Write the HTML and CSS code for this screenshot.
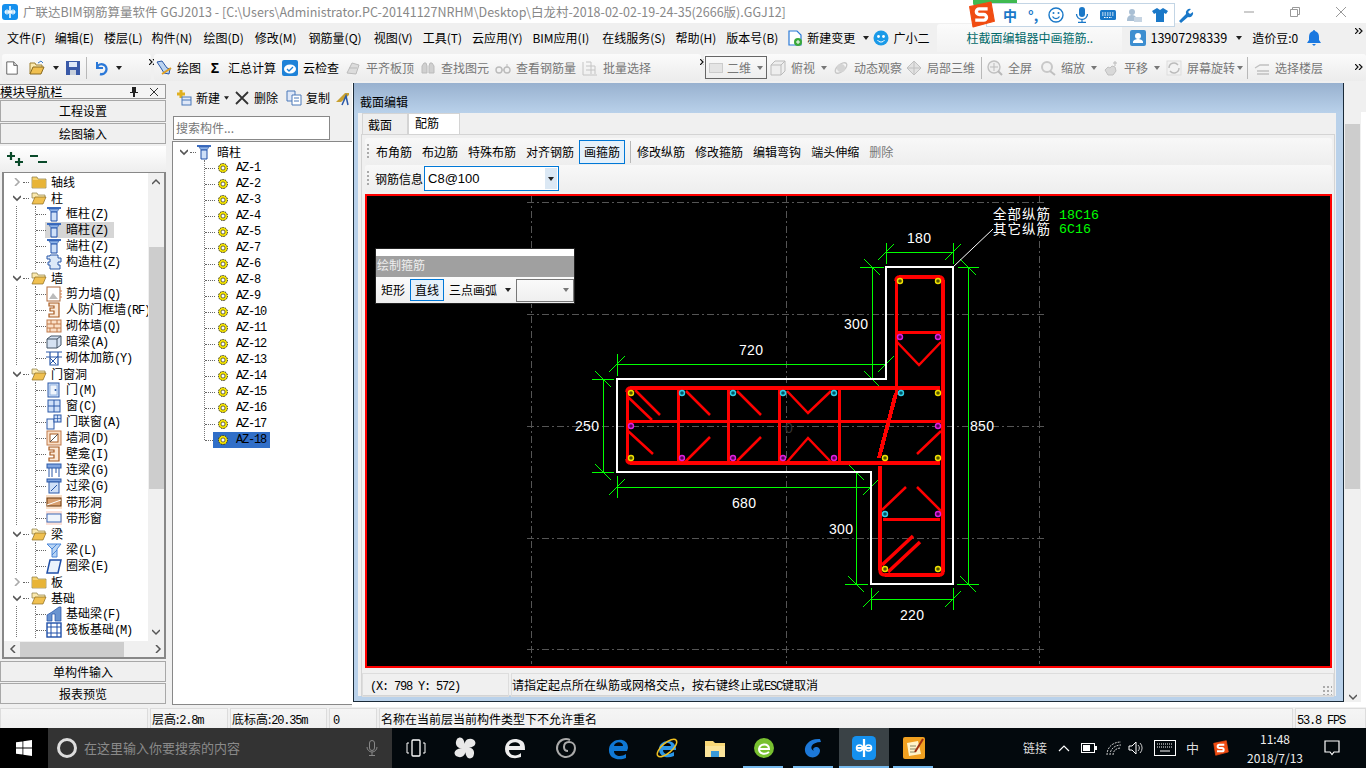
FILE: index.html
```html
<!DOCTYPE html>
<html lang="zh">
<head>
<meta charset="utf-8">
<title>广联达BIM钢筋算量软件 GGJ2013</title>
<link rel="stylesheet" href="styles.css">
</head>
<body>
<svg class="defs" width="0" height="0">
  <defs>
    <symbol id="chev-d" viewBox="0 0 8 8"><path d="M0 2l4 4 4-4" fill="none" stroke="#555" stroke-width="1.6"/></symbol>
    <symbol id="chev-r" viewBox="0 0 8 8"><path d="M2 0l4 4-4 4" fill="none" stroke="#aaa" stroke-width="1.6"/></symbol>
    <symbol id="folder" viewBox="0 0 16 16"><path d="M1 3h5l1 2h8v9H1z" fill="#f6d26e" stroke="#8a7a40" stroke-width=".7"/><path d="M1.5 6h13v7.500h-13z" fill="#e8b437"/></symbol>
    <symbol id="folder-open" viewBox="0 0 16 16"><path d="M1 3h5l1 2h7v3H1z" fill="#fbeab0" stroke="#8a7a40" stroke-width=".7"/><path d="M1 14l3-7h11l-3 7z" fill="#f0c050" stroke="#8a6a20" stroke-width=".7"/></symbol>
    <symbol id="col" viewBox="0 0 16 16"><path d="M1 1h14v2H1z" fill="#3b6cc0"/><path d="M3 3h10l-2 3H5z" fill="#8fb4ea" stroke="#2f5aa8" stroke-width=".6"/><path d="M5 6h6v9H5z" fill="#cfe0f8" stroke="#1f4fa8"/></symbol>
    <symbol id="gz" viewBox="0 0 16 16"><path d="M4 1h8v3h3v4h-3v3h2v4H4v-4H2V8h2V5H1V2h3z" fill="#dce8f8" stroke="#2a58a8"/></symbol>
    <symbol id="shear" viewBox="0 0 16 16"><rect x="1" y="1" width="13" height="14" fill="#fff" stroke="#b06a3a"/><path d="M3 13l4-6 5 6z" fill="#bbb"/><path d="M15 4v9" stroke="#d08050" stroke-dasharray="2 1"/></symbol>
    <symbol id="rf" viewBox="0 0 16 16"><path d="M3 1h10v14H3v-3h5V9H4V6h4V4H3z" fill="#fbe9d8" stroke="#a85a20" stroke-width="1.200"/></symbol>
    <symbol id="brick" viewBox="0 0 16 16"><rect x="1" y="2" width="14" height="12" fill="#fbe0c8" stroke="#c07a4a"/><path d="M1 6h14M1 10h14M5 2v4M11 2v4M8 6v4M4 10v4M11 10v4" stroke="#c07a4a"/></symbol>
    <symbol id="dbeam" viewBox="0 0 16 16"><path d="M1 5l4-3h10v9l-4 3H1z" fill="#d5e2f2" stroke="#456"/><path d="M1 5h10v9M11 5l4-3" fill="none" stroke="#456"/></symbol>
    <symbol id="rebar" viewBox="0 0 16 16"><path d="M0 2h16M0 7h16M4 2v13h8V2" fill="none" stroke="#2a58a8" stroke-width="1.200"/><path d="M4 14l8-8M4 8l6 6" stroke="#2a58a8"/></symbol>
    <symbol id="door" viewBox="0 0 16 16"><rect x="2" y="1" width="11" height="14" fill="#cfe0f8" stroke="#2a58a8"/><rect x="4" y="3" width="7" height="10" fill="#eef4fc" stroke="#6a94d0" stroke-width=".6"/><circle cx="9.500" cy="8" r="1" fill="#2a58a8"/></symbol>
    <symbol id="win" viewBox="0 0 16 16"><rect x="2" y="2" width="12" height="12" fill="#cfe0f8" stroke="#2a58a8"/><path d="M8 2v12M2 8h12" stroke="#2a58a8"/></symbol>
    <symbol id="dwin" viewBox="0 0 16 16"><rect x="1" y="5" width="7" height="10" fill="#eef4fc" stroke="#2a58a8"/><rect x="8" y="1" width="7" height="7" fill="#cfe0f8" stroke="#2a58a8"/><path d="M11.500 1v7M8 4.500h7" stroke="#2a58a8" stroke-width=".7"/></symbol>
    <symbol id="hole" viewBox="0 0 16 16"><rect x="1" y="1" width="14" height="14" fill="#fbe0c8" stroke="#c07a4a"/><rect x="4" y="4" width="8" height="8" fill="#fff" stroke="#a85a20"/><path d="M4 12l8-8" stroke="#555"/></symbol>
    <symbol id="lbeam" viewBox="0 0 16 16"><rect x="1" y="2" width="14" height="4" fill="#7fa4e0" stroke="#2a58a8"/><path d="M3 6v9M13 6v9M6 6v9M10 6v5" stroke="#2a58a8"/></symbol>
    <symbol id="lintel" viewBox="0 0 16 16"><rect x="1" y="1" width="14" height="3" fill="#7fa4e0" stroke="#2a58a8"/><rect x="3" y="4" width="10" height="11" fill="#cfe0f8" stroke="#2a58a8"/><path d="M5 13l6-6" stroke="#2a58a8"/></symbol>
    <symbol id="shole" viewBox="0 0 16 16"><rect x="0" y="1" width="16" height="14" fill="#fbe0c8"/><rect x="1" y="4" width="14" height="8" fill="#d8a070" stroke="#6a3a10"/><path d="M1 11l14-5" stroke="#fff"/></symbol>
    <symbol id="swin" viewBox="0 0 16 16"><rect x="0" y="1" width="16" height="14" fill="#fbe0d8"/><rect x="1" y="4" width="14" height="8" fill="#eef4fc" stroke="#3a6ab8"/></symbol>
    <symbol id="beam" viewBox="0 0 16 16"><path d="M1 2h14l-4 5v8H6V7z" fill="#b8d4f4" stroke="#4a86d8"/><path d="M6 7l5-5M6 13l5-5" stroke="#4a86d8"/></symbol>
    <symbol id="ring" viewBox="0 0 16 16"><path d="M4 2h11l-3 13H1z" fill="#eaf2fc" stroke="#1f4fa8" stroke-width="1.500"/></symbol>
    <symbol id="fbeam" viewBox="0 0 16 16"><path d="M1 15V9l5-3 7-5h2v14H9V8H6v7z" fill="#6a94d0" stroke="#1f4fa8" stroke-width=".7"/></symbol>
    <symbol id="raft" viewBox="0 0 16 16"><rect x="1" y="1" width="14" height="14" fill="#fff" stroke="#1f4fa8" stroke-width="1.400"/><path d="M1 5h14M1 11h14M5 1v14M11 1v14" stroke="#1f4fa8"/></symbol>
    <symbol id="gear" viewBox="0 0 12 12"><circle cx="6" cy="6" r="4.500" fill="#f5e400" stroke="#222" stroke-dasharray="1.500 1"/><circle cx="6" cy="6" r="2" fill="#fff" stroke="#333" stroke-width=".7"/></symbol>
    <symbol id="grey" viewBox="0 0 16 16"><path d="M2 13l5-10 7 2-3 9z" fill="#dcdcdc" stroke="#bbb"/><path d="M4 8h8" stroke="#bbb"/></symbol>
    <symbol id="bino" viewBox="0 0 16 16"><path d="M2 13V6l2-3h2l1 3v7zM9 13V6l1-3h2l2 3v7z" fill="#d0d0d0" stroke="#bbb"/></symbol>
    <symbol id="glass" viewBox="0 0 16 16"><circle cx="4" cy="10" r="3" fill="none" stroke="#bbb" stroke-width="1.400"/><circle cx="12" cy="10" r="3" fill="none" stroke="#bbb" stroke-width="1.400"/><path d="M7 10h2M12 7V4" stroke="#bbb"/></symbol>
    <symbol id="grid" viewBox="0 0 16 16"><path d="M1 2v13h14M4 2h5v12M4 6h9M4 10h9M13 6v8" fill="none" stroke="#c4c4c4"/></symbol>
    <symbol id="cube" viewBox="0 0 16 16"><path d="M1 5l4-4h10v10l-4 4H1zM1 5h10v10M11 5l4-4" fill="#eee" stroke="#bbb"/></symbol>
    <symbol id="orbit" viewBox="0 0 16 16"><ellipse cx="8" cy="8" rx="7" ry="3.500" transform="rotate(-40 8 8)" fill="none" stroke="#c8c8c8" stroke-width="1.400"/><circle cx="8" cy="8" r="4" fill="#d4d4d4"/></symbol>
    <symbol id="local" viewBox="0 0 16 16"><path d="M8 1l7 7-7 7-7-7z" fill="#e2e2e2" stroke="#c0c0c0"/><path d="M8 1v14M1 8h14" stroke="#c0c0c0"/></symbol>
    <symbol id="zoomfit" viewBox="0 0 16 16"><circle cx="7" cy="7" r="6" fill="#eee" stroke="#c0c0c0" stroke-width="1.400"/><path d="M11 11l4 4" stroke="#b8b8b8" stroke-width="2"/><path d="M7 3v8M3 7h8" stroke="#bbb"/></symbol>
    <symbol id="zoomio" viewBox="0 0 16 16"><circle cx="7" cy="7" r="5" fill="#f2f2f2" stroke="#c8c8c8" stroke-width="2"/><path d="M10 11l5 4" stroke="#c0c0c0" stroke-width="2"/></symbol>
    <symbol id="hand" viewBox="0 0 16 16"><path d="M2 10l3-3 2 1 2-2 3 1 1 4-3 4H5z" fill="#d8d8d8" stroke="#c0c0c0"/><path d="M12 1v5M10 3h4" stroke="#bbb"/></symbol>
    <symbol id="rot" viewBox="0 0 16 16"><rect x="1" y="1" width="14" height="14" fill="#f2f2f2" stroke="#ddd"/><path d="M3 8a5 5 0 0 1 9-3M13 8a5 5 0 0 1-9 3" fill="none" stroke="#bbb" stroke-width="1.400"/></symbol>
    <symbol id="floors" viewBox="0 0 16 16"><path d="M1 8l5-3h9M3 11h12M3 14h12M6 5h9" fill="none" stroke="#c0c0c0" stroke-width="1.300"/></symbol>
    <symbol id="caret" viewBox="0 0 6 4"><path d="M0 0h6L3 4z" fill="#222"/></symbol>
    <symbol id="caret-g" viewBox="0 0 6 4"><path d="M0 0h6L3 4z" fill="#777"/></symbol>
    <symbol id="more" viewBox="0 0 8 6"><path d="M0 0l3 3-3 3M4 0l3 3-3 3" fill="none" stroke="#111" stroke-width="1.200"/></symbol>
    <symbol id="app" viewBox="0 0 16 16"><rect width="16" height="16" rx="3" fill="#1590ee"/><path d="M8 2v12M3 8h10" stroke="#fff" stroke-width="1.500"/><circle cx="5" cy="8" r="2" fill="none" stroke="#fff"/><circle cx="11" cy="8" r="2" fill="none" stroke="#fff"/></symbol>
    <symbol id="sogou" viewBox="0 0 24 24"><path d="M1 5l19-4 3 17-19 5z" fill="#f04c12" stroke="#f04c12" stroke-linejoin="round"/><path d="M17 7H9.500a2.500 2.500 0 0 0 0 5h4a2.500 2.500 0 0 1 0 5H6" fill="none" stroke="#fff" stroke-width="3"/></symbol>
  </defs>
</svg>

<div class="sogou">
  <span class="sg-top"></span>
  <svg class="sg-logo"><use href="#sogou"/></svg>
  <div class="sg-bar">
    <span class="sg-zh">中</span>
    <span class="sg-pt">°,</span>
    <svg class="sg-ic" viewBox="0 0 16 16"><circle cx="8" cy="8" r="7" fill="none" stroke="#1a78c8" stroke-width="1.400"/><circle cx="5.500" cy="6" r="1" fill="#1a78c8"/><circle cx="10.500" cy="6" r="1" fill="#1a78c8"/><path d="M4.500 9.500a4 4 0 0 0 7 0" fill="none" stroke="#1a78c8" stroke-width="1.300"/></svg>
    <svg class="sg-ic" viewBox="0 0 16 16"><rect x="5" y="0" width="6" height="10" rx="3" fill="#1a78c8"/><path d="M2.500 7a5.500 5.500 0 0 0 11 0M8 12v3M4 15.500h8" fill="none" stroke="#1a78c8" stroke-width="1.300"/></svg>
    <svg class="sg-ic" viewBox="0 0 16 16"><rect x="0" y="3" width="16" height="10" rx="1.500" fill="#1a78c8"/><path d="M2 6h12M2 8h12M4 10.500h8" stroke="#fff" stroke-dasharray="1.500 1"/></svg>
    <svg class="sg-ic" viewBox="0 0 16 16"><circle cx="6" cy="5" r="3" fill="#a9bfd4"/><path d="M1 13c0-4 3-5 5-5s4 1 4 3v3H1z" fill="#a9bfd4"/><rect x="8" y="10" width="8" height="5" fill="#c6d4e2"/></svg>
    <svg class="sg-ic" viewBox="0 0 16 16"><path d="M5 1L0 4l2 3 2-1v9h8V6l2 1 2-3-5-3-3 2z" fill="#1a78c8"/></svg>
    <svg class="sg-ic" viewBox="0 0 16 16"><path d="M1 14l7-7a4 4 0 0 1 5-5l-3 3 2 2 3-2a4 4 0 0 1-5 5l-7 6z" fill="#1a78c8"/></svg>
  </div>
</div>

<header class="titlebar">
  <svg class="title-ic"><use href="#app"/></svg>
  <span class="title-text">广联达BIM钢筋算量软件 GGJ2013 - [C:\Users\Administrator.PC-20141127NRHM\Desktop\白龙村-2018-02-02-19-24-35(2666版).GGJ12]</span>
  <div class="winctl">
    <svg class="wc" viewBox="0 0 12 12"><path d="M1 6h10" stroke="#999"/></svg>
    <svg class="wc" viewBox="0 0 12 12"><path d="M1.500 3.500h7v7h-7zM3.500 3.500v-2h7v7h-2" fill="none" stroke="#999"/></svg>
    <svg class="wc" viewBox="0 0 12 12"><path d="M1 1l10 10M11 1L1 11" stroke="#999"/></svg>
  </div>
</header>

<nav class="menubar">
  <span class="mi mr9">文件(F)</span><span class="mi">编辑(E)</span><span class="mi mr9">楼层(L)</span><span class="mi mr11">构件(N)</span><span class="mi mr11">绘图(D)</span><span class="mi mr12">修改(M)</span><span class="mi mr12">钢筋量(Q)</span><span class="mi">视图(V)</span><span class="mi">工具(T)</span><span class="mi">云应用(Y)</span><span class="mi mr13">BIM应用(I)</span><span class="mi">在线服务(S)</span><span class="mi">帮助(H)</span><span class="mi mr9">版本号(B)</span>
  <span class="mi mi-ic">
    <svg class="ic" viewBox="0 0 16 16"><path d="M2 1h8l4 4v10H2z" fill="#fff" stroke="#2a7ad8" stroke-width="1.200"/><circle cx="11" cy="12" r="4" fill="#3aa83a"/><path d="M9 12h4M11 10v4" stroke="#fff"/></svg>新建变更<svg class="caret"><use href="#caret"/></svg>
  </span>
  <span class="mi mi-ic mi-xer">
    <svg class="ic" viewBox="0 0 16 16"><circle cx="8" cy="8" r="7.500" fill="#1a9ae8"/><circle cx="5.500" cy="6.500" r="1.400" fill="#fff"/><circle cx="10.500" cy="6.500" r="1.400" fill="#fff"/><path d="M4.500 10a4 4 0 0 0 7 0" fill="none" stroke="#fff"/></svg>广小二
  </span>
  <span class="news">柱截面编辑器中画箍筋..</span>
  <span class="mi mi-ic mi-user">
    <svg class="ic" viewBox="0 0 16 16"><rect width="16" height="16" rx="2" fill="#3d8ed0"/><circle cx="8" cy="6" r="3" fill="#fff"/><path d="M3 13h10v-1c0-2-3-3-5-3s-5 1-5 3z" fill="#fff"/></svg><span class="phone">13907298339</span><svg class="caret caret-u"><use href="#caret"/></svg>
  </span>
  <span class="mi">造价豆:0</span>
  <svg class="ic bell" viewBox="0 0 16 16"><path d="M8 0a1 1 0 0 1 1 1c3 1 4 3 4 6v3l2 3H1l2-3V7c0-3 1-5 4-6a1 1 0 0 1 1-1z" fill="#1a78e0"/><path d="M6 14h4l-2 2z" fill="#1a78e0"/></svg>
  <svg class="more more-end"><use href="#more"/></svg>
</nav>

<div class="toolbar">
  <div class="seg seg-a">
    <svg class="ic i14" viewBox="0 0 16 16"><path d="M2 1h8l4 4v10H2z" fill="#fff" stroke="#555"/><path d="M10 1v4h4" fill="#ddd" stroke="#555"/></svg>
    <svg class="ic ml10" viewBox="0 0 16 16"><path d="M1 14V3h5l1 2h6v2" fill="#fbeab0" stroke="#a08030"/><path d="M1 14l3-7h11l-3 7z" fill="#f0c050" stroke="#8a6a20"/><path d="M9 3l3-2 2 2" fill="none" stroke="#3a7ac8"/></svg>
    <svg class="caret ml8"><use href="#caret"/></svg>
    <svg class="ic ml6" viewBox="0 0 16 16"><path d="M1 1h14v14H1z" fill="#3a5aa8"/><path d="M4 2h8v5H4z" fill="#dfe8f8"/><path d="M5 10h6v5H5z" fill="#c8d0dc"/></svg>
    <span class="sep ml5"></span>
    <svg class="ic ml6" viewBox="0 0 16 16"><path d="M4 2v6h6" fill="none" stroke="#2a78d8" stroke-width="2"/><path d="M4 7a5 5 0 1 1 3 7" fill="none" stroke="#2a78d8" stroke-width="2.400"/></svg>
    <svg class="caret ml7"><use href="#caret"/></svg>
    <svg class="more ml27"><use href="#more"/></svg>
  </div>
  <div class="seg seg-b">
    <span class="ti"><svg class="ic" viewBox="0 0 16 16"><path d="M1 2l5-1 5 7 3 1-1 5-5-1-3-5z" fill="#bcd4f0" stroke="#2a58a8"/><path d="M6 14l9-6" stroke="#e0a020" stroke-width="2"/></svg>绘图</span>
    <span class="ti ti-s"><b class="sigma">Σ</b>汇总计算</span>
    <span class="ti"><svg class="ic" viewBox="0 0 16 16"><rect width="16" height="16" rx="2" fill="#1e82d8"/><ellipse cx="8" cy="9" rx="6" ry="4.500" fill="#fff"/><path d="M5 9l2 2 4-4" fill="none" stroke="#1e82d8" stroke-width="1.300"/></svg>云检查</span>
    <span class="ti off"><svg class="ic"><use href="#grey"/></svg>平齐板顶</span>
    <span class="ti off"><svg class="ic"><use href="#bino"/></svg>查找图元</span>
    <span class="ti off"><svg class="ic"><use href="#glass"/></svg>查看钢筋量</span>
    <span class="ti off"><svg class="ic"><use href="#grid"/></svg>批量选择</span>
    <svg class="more ml42"><use href="#more"/></svg>
  </div>
  <div class="seg seg-c">
    <span class="combo2d"><i class="swatch"></i>二维<svg class="caret caret-r"><use href="#caret-g"/></svg></span>
    <span class="ti off ml3"><svg class="ic"><use href="#cube"/></svg>俯视<svg class="caret ml1"><use href="#caret-g"/></svg></span>
    <span class="ti off ml6"><svg class="ic"><use href="#orbit"/></svg>动态观察</span>
    <span class="ti off ml4"><svg class="ic"><use href="#local"/></svg>局部三维</span>
    <span class="sep ml6"></span>
    <span class="ti off ml5"><svg class="ic"><use href="#zoomfit"/></svg>全屏</span>
    <span class="ti off ml8"><svg class="ic"><use href="#zoomio"/></svg>缩放<svg class="caret ml1"><use href="#caret-g"/></svg></span>
    <span class="ti off ml6"><svg class="ic"><use href="#hand"/></svg>平移<svg class="caret ml1"><use href="#caret-g"/></svg></span>
    <span class="ti off ml6"><svg class="ic"><use href="#rot"/></svg>屏幕旋转<svg class="caret mln3"><use href="#caret-g"/></svg></span>
    <span class="sep ml4"></span>
    <span class="ti off ml6"><svg class="ic"><use href="#floors"/></svg>选择楼层</span>
    <svg class="more more-end"><use href="#more"/></svg>
  </div>
</div>

<main class="main">
  <aside class="nav">
    <div class="nav-head"><span>模块导航栏</span><span class="nav-pin">
      <svg class="pin" viewBox="0 0 10 10"><path d="M3 0h4v5h2v1H6v4H4V6H1V5h2z" fill="#222"/></svg>
      <svg class="pin" viewBox="0 0 10 10"><path d="M1 1l8 8M9 1L1 9" stroke="#333"/></svg></span></div>
    <div class="nav-btn nav-btn-1">工程设置</div>
    <div class="nav-btn">绘图输入</div>
    <div class="nav-tools">
      <svg class="plusminus" viewBox="0 0 18 14"><path d="M1 4h8M5 0v8M9 10h8M13 6v8" stroke="#0a4a2a" stroke-width="2.200"/></svg>
      <svg class="plusminus" viewBox="0 0 18 14"><path d="M0 4h8M8 10h9" stroke="#0a4a2a" stroke-width="2.200"/></svg>
    </div>
    <div class="tree-box">
      <div class="tree-view">
        <div class="l1"><svg class="tw"><use href="#chev-r"/></svg><i class="cn1"></i><svg class="ic"><use href="#folder"/></svg><span>轴线</span></div>
        <div class="l1"><svg class="tw"><use href="#chev-d"/></svg><i class="cn1"></i><svg class="ic"><use href="#folder-open"/></svg><span>柱</span></div>
        <div class="kids"><div class="kids-in">
          <div class="l2"><i class="cn2"></i><svg class="ic"><use href="#col"/></svg><span>框柱<span class="lat">(Z)</span></span></div>
          <div class="l2 sel"><i class="cn2"></i><svg class="ic"><use href="#col"/></svg><span>暗柱<span class="lat">(Z)</span></span></div>
          <div class="l2"><i class="cn2"></i><svg class="ic"><use href="#col"/></svg><span>端柱<span class="lat">(Z)</span></span></div>
          <div class="l2"><i class="cn2"></i><svg class="ic"><use href="#gz"/></svg><span>构造柱<span class="lat">(Z)</span></span></div>
        </div></div>
        <div class="l1"><svg class="tw"><use href="#chev-d"/></svg><i class="cn1"></i><svg class="ic"><use href="#folder-open"/></svg><span>墙</span></div>
        <div class="kids"><div class="kids-in">
          <div class="l2"><i class="cn2"></i><svg class="ic"><use href="#shear"/></svg><span>剪力墙<span class="lat">(Q)</span></span></div>
          <div class="l2"><i class="cn2"></i><svg class="ic"><use href="#rf"/></svg><span>人防门框墙<span class="lat">(RF)</span></span></div>
          <div class="l2"><i class="cn2"></i><svg class="ic"><use href="#brick"/></svg><span>砌体墙<span class="lat">(Q)</span></span></div>
          <div class="l2"><i class="cn2"></i><svg class="ic"><use href="#dbeam"/></svg><span>暗梁<span class="lat">(A)</span></span></div>
          <div class="l2"><i class="cn2"></i><svg class="ic"><use href="#rebar"/></svg><span>砌体加筋<span class="lat">(Y)</span></span></div>
        </div></div>
        <div class="l1"><svg class="tw"><use href="#chev-d"/></svg><i class="cn1"></i><svg class="ic"><use href="#folder-open"/></svg><span>门窗洞</span></div>
        <div class="kids"><div class="kids-in">
          <div class="l2"><i class="cn2"></i><svg class="ic"><use href="#door"/></svg><span>门<span class="lat">(M)</span></span></div>
          <div class="l2"><i class="cn2"></i><svg class="ic"><use href="#win"/></svg><span>窗<span class="lat">(C)</span></span></div>
          <div class="l2"><i class="cn2"></i><svg class="ic"><use href="#dwin"/></svg><span>门联窗<span class="lat">(A)</span></span></div>
          <div class="l2"><i class="cn2"></i><svg class="ic"><use href="#hole"/></svg><span>墙洞<span class="lat">(D)</span></span></div>
          <div class="l2"><i class="cn2"></i><svg class="ic"><use href="#rf"/></svg><span>壁龛<span class="lat">(I)</span></span></div>
          <div class="l2"><i class="cn2"></i><svg class="ic"><use href="#lbeam"/></svg><span>连梁<span class="lat">(G)</span></span></div>
          <div class="l2"><i class="cn2"></i><svg class="ic"><use href="#lintel"/></svg><span>过梁<span class="lat">(G)</span></span></div>
          <div class="l2"><i class="cn2"></i><svg class="ic"><use href="#shole"/></svg><span>带形洞</span></div>
          <div class="l2"><i class="cn2"></i><svg class="ic"><use href="#swin"/></svg><span>带形窗</span></div>
        </div></div>
        <div class="l1"><svg class="tw"><use href="#chev-d"/></svg><i class="cn1"></i><svg class="ic"><use href="#folder-open"/></svg><span>梁</span></div>
        <div class="kids"><div class="kids-in">
          <div class="l2"><i class="cn2"></i><svg class="ic"><use href="#beam"/></svg><span>梁<span class="lat">(L)</span></span></div>
          <div class="l2"><i class="cn2"></i><svg class="ic"><use href="#ring"/></svg><span>圈梁<span class="lat">(E)</span></span></div>
        </div></div>
        <div class="l1"><svg class="tw"><use href="#chev-r"/></svg><i class="cn1"></i><svg class="ic"><use href="#folder"/></svg><span>板</span></div>
        <div class="l1"><svg class="tw"><use href="#chev-d"/></svg><i class="cn1"></i><svg class="ic"><use href="#folder-open"/></svg><span>基础</span></div>
        <div class="kids"><div class="kids-in">
          <div class="l2"><i class="cn2"></i><svg class="ic"><use href="#fbeam"/></svg><span>基础梁<span class="lat">(F)</span></span></div>
          <div class="l2"><i class="cn2"></i><svg class="ic"><use href="#raft"/></svg><span>筏板基础<span class="lat">(M)</span></span></div>
        </div></div>
      </div>
      <div class="vscroll"><svg class="sb-ar" viewBox="0 0 8 8"><path d="M0 6l4-4 4 4" fill="none" stroke="#555" stroke-width="1.500"/></svg><i class="vthumb"></i><svg class="sb-ar sb-end" viewBox="0 0 8 8"><path d="M0 2l4 4 4-4" fill="none" stroke="#555" stroke-width="1.500"/></svg></div>
      <div class="hscroll"><svg class="sb-ar" viewBox="0 0 8 8"><path d="M6 0L2 4l4 4" fill="none" stroke="#555" stroke-width="1.500"/></svg><i class="hthumb"></i><svg class="sb-ar" viewBox="0 0 8 8"><path d="M2 0l4 4-4 4" fill="none" stroke="#555" stroke-width="1.500"/></svg></div>
    </div>
    <div class="nav-btn nav-btn-b">单构件输入</div>
    <div class="nav-btn">报表预览</div>
  </aside>

  <section class="comp">
    <div class="comp-tools">
      <span class="ti"><svg class="ic" viewBox="0 0 16 16"><path d="M1 4h8M5 0v8" stroke="#e0b020" stroke-width="3"/><rect x="6" y="7" width="9" height="8" fill="#dfe8f8" stroke="#4a78b8"/><path d="M6 10h9" stroke="#4a78b8"/></svg>新建<svg class="caret caret-n"><use href="#caret"/></svg></span>
      <span class="ti"><svg class="ic" viewBox="0 0 16 16"><path d="M2 2l12 12M14 2L2 14" stroke="#333" stroke-width="1.800"/></svg>删除</span>
      <span class="ti ml3"><svg class="ic" viewBox="0 0 16 16"><path d="M1 1h8v10H1z" fill="#dfe8f8" stroke="#4a78b8"/><path d="M6 5h9v10H6z" fill="#fff" stroke="#4a78b8"/><path d="M8 8h5M8 11h5" stroke="#4a78b8"/></svg>复制</span>
      <svg class="ic" viewBox="0 0 16 16"><path d="M1 12l9-9h4v2l-8 7z" fill="#c8a030"/><path d="M7 15l4-9 2 9" fill="none" stroke="#2a58a8" stroke-width="1.500"/></svg>
    </div>
    <div class="search"><span class="search-in">搜索构件...</span></div>
    <div class="comp-tree">
      <div class="root-row"><svg class="tw"><use href="#chev-d"/></svg><i class="cn3"></i><svg class="ic"><use href="#col"/></svg><span>暗柱</span></div>
      <div class="az-list">
        <div class="az"><i class="cn2"></i><svg class="gear"><use href="#gear"/></svg><span>AZ-1</span></div>
        <div class="az"><i class="cn2"></i><svg class="gear"><use href="#gear"/></svg><span>AZ-2</span></div>
        <div class="az"><i class="cn2"></i><svg class="gear"><use href="#gear"/></svg><span>AZ-3</span></div>
        <div class="az"><i class="cn2"></i><svg class="gear"><use href="#gear"/></svg><span>AZ-4</span></div>
        <div class="az"><i class="cn2"></i><svg class="gear"><use href="#gear"/></svg><span>AZ-5</span></div>
        <div class="az"><i class="cn2"></i><svg class="gear"><use href="#gear"/></svg><span>AZ-7</span></div>
        <div class="az"><i class="cn2"></i><svg class="gear"><use href="#gear"/></svg><span>AZ-6</span></div>
        <div class="az"><i class="cn2"></i><svg class="gear"><use href="#gear"/></svg><span>AZ-8</span></div>
        <div class="az"><i class="cn2"></i><svg class="gear"><use href="#gear"/></svg><span>AZ-9</span></div>
        <div class="az"><i class="cn2"></i><svg class="gear"><use href="#gear"/></svg><span>AZ-10</span></div>
        <div class="az"><i class="cn2"></i><svg class="gear"><use href="#gear"/></svg><span>AZ-11</span></div>
        <div class="az"><i class="cn2"></i><svg class="gear"><use href="#gear"/></svg><span>AZ-12</span></div>
        <div class="az"><i class="cn2"></i><svg class="gear"><use href="#gear"/></svg><span>AZ-13</span></div>
        <div class="az"><i class="cn2"></i><svg class="gear"><use href="#gear"/></svg><span>AZ-14</span></div>
        <div class="az"><i class="cn2"></i><svg class="gear"><use href="#gear"/></svg><span>AZ-15</span></div>
        <div class="az"><i class="cn2"></i><svg class="gear"><use href="#gear"/></svg><span>AZ-16</span></div>
        <div class="az"><i class="cn2"></i><svg class="gear"><use href="#gear"/></svg><span>AZ-17</span></div>
        <div class="az az-sel"><i class="cn2"></i><div class="az-hl"><svg class="gear"><use href="#gear"/></svg><span>AZ-18</span></div></div>
      </div>
    </div>
  </section>

  <div class="center"></div>

  <div class="rstrip">
    <div class="rstrip-top"></div>
    <div class="rscroll"><i class="rthumb"></i><svg class="sb-ar sb-end" viewBox="0 0 8 8"><path d="M0 2l4 4 4-4" fill="none" stroke="#555" stroke-width="1.500"/></svg></div>
  </div>

  <div class="dialog">
    <div class="dlg-title">截面编辑</div>
    <div class="dlg-body">
      <div class="tabs"><span class="tab">截面</span><span class="tab tab-on">配筋</span></div>
      <div class="tab-panel">
        <div class="drow">
          <i class="grip"></i>
          <span class="dbtn">布角筋</span><span class="dbtn">布边筋</span><span class="dbtn">特殊布筋</span><span class="dbtn">对齐钢筋</span><span class="dbtn dbtn-on">画箍筋</span><span class="sep"></span><span class="dbtn dbtn-a">修改纵筋</span><span class="dbtn">修改箍筋</span><span class="dbtn">编辑弯钩</span><span class="dbtn">端头伸缩</span><span class="dbtn off">删除</span>
        </div>
        <div class="drow drow2">
          <i class="grip"></i>
          <span class="dlabel">钢筋信息</span>
          <span class="dcombo"><span>C8@100</span><span class="dcombo-btn"><svg class="caret"><use href="#caret"/></svg></span></span>
        </div>
        <div class="canvas">
          <svg class="draw" viewBox="367 196 963 470" shape-rendering="crispEdges">
            <g class="grid-l">
              <path d="M527 202H1044M527 314H1044M527 426H1044M527 538H1044M527 649H1044"/>
              <path d="M531.500 196V664M786 196V664M1039 196V664"/>
            </g>
            <text class="zero" x="785" y="433">0</text>
            <g class="dim">
              <path d="M886 252H953M886 243V264M953 243V264M878 260L894 244M945 260L961 244"/>
              <path d="M872 267V379M860 267H884M860 379H884M864 259L880 275M864 371L880 387"/>
              <path d="M968 267V584M958 267H979M957 584H979M960 259L976 275M960 576L976 592"/>
              <path d="M617 364H886M617 354V376M886 354V378M609 372L625 356M878 372L894 356"/>
              <path d="M603 379V472M592 379H614M592 472H614M595 371L611 387M595 464L611 480"/>
              <path d="M617 487H871M617 476V498M871 476V498M609 495L625 479M863 495L879 479"/>
              <path d="M856 472V584M845 472H868M845 584H868M848 464L864 480M848 576L864 592"/>
              <path d="M871 599H953M871 588V610M953 588V610M863 607L879 591M945 607L961 591"/>
            </g>
            <path class="outline" d="M617 379H886V267H953V584H871V472H617Z"/>
            <path class="leader" d="M953 267L993 229"/>
            <g class="rebar">
              <path class="r3" d="M627 421H943M627 391V460M678 390V462M728 390V462M779 390V462M839 390V462"/>
              <path class="r3" d="M896 280V393M896 332H943M883 519H940"/>
              <path class="r4" d="M630 388H940M630 463H940M899 277H940"/>
              <path class="r4" d="M943 280V463M880 466V570M943 463V572M885 575H940"/>
              <path class="r4" d="M896 393L879 458"/>
            </g>
            <g class="rebar-d" shape-rendering="auto">
              <path d="M635 390L660 415M628 397L652 420M628 431L653 454M686 391L710 415M737 391L761 415"/>
              <path d="M787 391L808 413L831 391M685 462L710 437M737 461L761 437M787 462L808 438L831 462M917 454L941 431"/>
              <path d="M897 342L919 365L941 342M882 510L906 487M917 487L942 512"/>
              <path class="thick" d="M882 565L913 536M888 572L920 542"/>
              <path class="thick" d="M627 392Q627 388 631 388M627 459Q627 463 631 463M896 281Q896 277 900 277M939 277Q943 277 943 281M880 570Q880 575 885 575M939 575Q943 575 943 571"/>
            </g>
            <g class="dots" shape-rendering="auto">
              <g class="d-y"><circle cx="631" cy="393" r="2.500"/><circle cx="631" cy="458" r="2.500"/><circle cx="938" cy="393" r="2.500"/><circle cx="885" cy="458" r="2.500"/><circle cx="938" cy="458" r="2.500"/><circle cx="900" cy="281" r="2.500"/><circle cx="938" cy="281" r="2.500"/><circle cx="885" cy="569" r="2.500"/><circle cx="938" cy="569" r="2.500"/></g>
              <g class="d-c"><circle cx="682" cy="393" r="2.500"/><circle cx="733" cy="393" r="2.500"/><circle cx="783" cy="393" r="2.500"/><circle cx="834" cy="393" r="2.500"/><circle cx="901" cy="393" r="2.500"/><circle cx="885" cy="514" r="2.500"/></g>
              <g class="d-m"><circle cx="631" cy="426" r="2.500"/><circle cx="938" cy="426" r="2.500"/><circle cx="682" cy="458" r="2.500"/><circle cx="733" cy="458" r="2.500"/><circle cx="783" cy="458" r="2.500"/><circle cx="834" cy="458" r="2.500"/><circle cx="900" cy="337" r="2.500"/><circle cx="938" cy="337" r="2.500"/><circle cx="938" cy="514" r="2.500"/></g>
            </g>
            <g class="lbl">
              <text x="907" y="243">180</text>
              <text x="844" y="329">300</text>
              <text x="739" y="355">720</text>
              <text x="575" y="431">250</text>
              <text x="970" y="431">850</text>
              <text x="732" y="508">680</text>
              <text x="829" y="534">300</text>
              <text x="900" y="620">220</text>
            </g>
            <text class="lbl-cn" x="993" y="219">全部纵筋</text>
            <text class="lbl-cn" x="993" y="234">其它纵筋</text>
            <text class="lbl-g" x="1059" y="219">18C16</text>
            <text class="lbl-g" x="1059" y="233">6C16</text>
          </svg>
          <div class="float">
            <div class="float-top"></div>
            <div class="float-title">绘制箍筋</div>
            <div class="float-row">
              <span>矩形</span><span class="float-on">直线</span><span>三点画弧</span><svg class="caret float-car"><use href="#caret"/></svg>
              <span class="float-combo"><svg class="caret"><use href="#caret-g"/></svg></span>
            </div>
          </div>
        </div>
        <div class="dstatus">
          <span class="ds-a"><span class="lat">(X: 798 Y: 572)</span></span>
          <span class="ds-b">请指定起点所在纵筋或网格交点，按右键终止或<span class="lat">ESC</span>键取消<i class="resize"></i></span>
        </div>
      </div>
    </div>
  </div>
</main>

<footer class="status">
  <span class="st st1"></span>
  <span class="st st2">层高:<span class="lat">2.8m</span></span>
  <span class="st st3">底标高:<span class="lat">20.35m</span></span>
  <span class="st st4"><span class="lat">0</span></span>
  <span class="st st5">名称在当前层当前构件类型下不允许重名</span>
  <span class="st st6"><span class="lat">53.8 FPS</span></span>
</footer>

<div class="taskbar">
  <div class="start"><svg class="win-logo" viewBox="0 0 16 16"><path d="M0 2.300l6.500-.9v6.200H0zM7.300 1.300L16 0v7.600H7.300zM0 8.400h6.500v6.200L0 13.700zM7.300 8.400H16V16l-8.700-1.200z" fill="#fff"/></svg></div>
  <div class="tsearch">
    <i class="cortana"></i>
    <span class="ts-text">在这里输入你要搜索的内容</span>
    <svg class="ts-mic" viewBox="0 0 12 16"><rect x="3.500" y="0.500" width="5" height="10" rx="2.500" fill="none" stroke="#888"/><path d="M1 7a5 5 0 0 0 10 0M6 12v3M3 15.500h6" fill="none" stroke="#888"/></svg>
  </div>
  <div class="tapps">
    <span class="tapp"><svg viewBox="0 0 20 20" class="tic"><rect x="6" y="2" width="8" height="16" rx="1" fill="none" stroke="#fff" stroke-width="1.300"/><path d="M3 5H1v10h2M17 5h2v10h-2" fill="none" stroke="#fff"/></svg></span>
    <span class="tapp"><svg viewBox="0 0 24 24" class="tic tic-l"><path d="M12 12C4 14 1 8 4 3c3-3 8-2 8 9zM12 12c-2-8 4-11 9-8 3 3 2 8-9 8zM12 12c8-2 11 4 8 9-3 3-8 2-8-9zM12 12c2 8-4 11-9 8-3-3-2-8 9-8z" fill="#e8e8e8"/></svg></span>
    <span class="tapp"><svg viewBox="0 0 24 24" class="tic tic-l"><path d="M19 14H6c0 6 8 7 12 3v4c-8 3-16 0-16-8S10 0 19 5c3 2 3 6 3 9zM6 10h11c0-5-10-5-11 0z" fill="#eee"/></svg></span>
    <span class="tapp"><svg viewBox="0 0 24 24" class="tic tic-l"><path d="M17 4a9 9 0 1 0 5 8c0-4-3-6-6-6s-5 2-5 5 2 4 4 4" fill="none" stroke="#aaa" stroke-width="2"/></svg></span>
    <span class="tapp"><svg viewBox="0 0 24 24" class="tic tic-l"><path d="M21 15H8c0 6 8 6 12 3v4c-7 3-18 1-17-9C4 2 22 0 22 12zM8 10h9c0-5-8-5-9 0z" fill="#0f78d4"/></svg></span>
    <span class="tapp"><svg viewBox="0 0 24 24" class="tic tic-l"><path d="M21 14H8c0 5 6 5 11 2v4c-7 3-15 1-15-7C4 4 19 1 21 12z" fill="#2a96e8"/><path d="M8 10h8c0-4-7-4-8 0z" fill="#000"/><ellipse cx="12" cy="12" rx="12" ry="5" transform="rotate(-40 12 12)" fill="none" stroke="#f0c020" stroke-width="1.500"/></svg></span>
    <span class="tapp"><svg viewBox="0 0 24 24" class="tic tic-l"><path d="M2 5h8l2 2h10v14H2z" fill="#f8d878"/><path d="M2 10h20v11H2z" fill="#fbe49a"/><path d="M8 15h8v6H8z" fill="#3a9ad8"/></svg></span>
    <span class="tapp under"><svg viewBox="0 0 24 24" class="tic tic-l"><circle cx="12" cy="12" r="10" fill="#78c030"/><path d="M7 13h10c0-6-9-6-10 0 0 5 6 6 10 3" fill="none" stroke="#fff" stroke-width="2"/></svg></span>
    <span class="tapp under"><svg viewBox="0 0 24 24" class="tic tic-l"><path d="M18 3C8 2 2 9 3 15c1 6 8 8 12 5 4-3 4-8 0-9-3 0-5 2-3 4-5-2-3-9 7-9z" fill="#1c78d8"/></svg></span>
    <span class="tapp tapp-act under"><svg class="tic tic-x"><use href="#app"/></svg></span>
    <span class="tapp under"><svg viewBox="0 0 24 24" class="tic tic-l"><rect x="1" y="1" width="22" height="22" rx="2" fill="#f0a020"/><path d="M5 7l11-2 3 13-12 2z" fill="#fff3c8"/><path d="M8 10h6M8 13h6M8 16h5" stroke="#886"/><path d="M13 16L21 3" stroke="#a03010" stroke-width="2"/></svg></span>
  </div>
  <div class="tray">
    <span class="tlink">链接</span>
    <svg viewBox="0 0 12 8" class="tr-ic tr-up"><path d="M1 7l5-5 5 5" fill="none" stroke="#fff" stroke-width="1.200"/></svg>
    <svg viewBox="0 0 16 10" class="tr-ic tr-bat"><rect x=".5" y=".5" width="13" height="9" fill="none" stroke="#fff"/><rect x="2" y="2" width="7" height="6" fill="#fff"/><rect x="14" y="3" width="2" height="4" fill="#fff"/></svg>
    <svg viewBox="0 0 16 16" class="tr-ic tr-wifi"><path d="M1 15c0-8 6-13 14-13M4 15c0-6 5-10 11-10M7 15c0-4 3-7 8-7" fill="none" stroke="#ccc" stroke-dasharray="2 1"/></svg>
    <svg viewBox="0 0 16 16" class="tr-ic tr-vol"><path d="M1 6h3l4-4v12l-4-4H1z" fill="none" stroke="#fff"/><path d="M10 5a4 4 0 0 1 0 6M12 3a7 7 0 0 1 0 10" fill="none" stroke="#ccc"/></svg>
    <svg viewBox="0 0 22 16" class="tr-ic tr-kb"><rect x=".5" y=".5" width="21" height="15" fill="none" stroke="#fff"/><path d="M3 4h16M3 7h16" stroke="#fff" stroke-dasharray="1 1"/><path d="M6 11h10" stroke="#fff"/></svg>
    <span class="tzh">中</span>
    <svg class="tr-s"><use href="#sogou"/></svg>
    <div class="clock"><span>11:48</span><span>2018/7/13</span></div>
    <svg viewBox="0 0 16 16" class="tr-ic tr-note"><path d="M1 1h14v11h-5l-2 2.500L6 12H1z" fill="none" stroke="#fff" stroke-width="1.200"/></svg>
  </div>
</div>
</body>
</html>
```

FILE: styles.css
```css
* { box-sizing: border-box; }
html, body { margin: 0; padding: 0; }
body {
  width: 1366px; height: 768px; overflow: hidden; position: relative;
  display: flex; flex-direction: column;
  background: #f0f0f0; color: #000;
  font: 12px/16px "Noto Sans CJK SC", "Liberation Sans", sans-serif;
}
svg { display: block; flex: none; }
i { display: block; font-style: normal; flex: none; }
.defs { position: absolute; }
.lat { font-family: "Liberation Mono", monospace; font-size: 12px; letter-spacing: -1.200px; }
.ic { width: 16px; height: 16px; }
.i14 { width: 14px; }
.caret { width: 6px; height: 4px; }
.more { width: 8px; height: 6px; }
.ml1 { margin-left: 1px; } .ml3 { margin-left: 3px; } .ml4 { margin-left: 4px; } .ml5 { margin-left: 5px; } .ml6 { margin-left: 6px; }
.ml7 { margin-left: 7px; } .ml8 { margin-left: 8px; } .mln3 { margin-left: -3px; }
.ml10 { margin-left: 10px; } .ml27 { margin-left: 27px; } .ml42 { margin-left: 49px; }
.off { color: #777; }
.sep { display: block; width: 1px; height: 22px; background: #b8b8b8; flex: none; }

/* title bar */
.titlebar { height: 23px; flex: none; background: #fff; display: flex; align-items: center; padding-left: 2px; color: #888; }
.title-ic { width: 16px; height: 16px; }
.title-text { margin-left: 5px; font-size: 12.5px; white-space: nowrap; }
.winctl { margin-left: auto; display: flex; gap: 34px; padding-right: 19px; }
.wc { width: 12px; height: 12px; }

/* sogou overlay */
.sogou { position: absolute; left: 968px; top: 0; width: 208px; height: 28px; z-index: 5; }
.sg-top { position: absolute; left: 5px; top: 0; width: 44px; height: 6px; background: #3fb950; border-radius: 0 0 3px 3px; }
.sg-logo { position: absolute; left: 0; top: 1px; width: 28px; height: 27px; z-index: 1; }
.sg-bar { position: absolute; left: 18px; top: 3px; width: 189px; height: 24px; background: #fff; border: 1px solid #c3d5e5; display: flex; align-items: center; padding-left: 14px; gap: 10px; }
.sg-zh { color: #1a78c8; font-weight: 700; font-size: 14px; width: 14px; margin-left: 2px; }
.sg-pt { color: #1a78c8; font-weight: 700; font-size: 14px; width: 12px; margin-left: 1px; }
.sg-ic { width: 16px; height: 16px; }

/* menu */
.menubar { height: 30px; flex: none; display: flex; align-items: center; padding-left: 7px; background: #f0f0f0; position: relative; white-space: nowrap; }
.mi { margin-right: 10px; display: flex; align-items: center; }
.mr9 { margin-right: 9px; } .mr11 { margin-right: 11px; } .mr12 { margin-right: 12px; } .mr13 { margin-right: 13px; }
.mi-ic .ic { margin-right: 4px; }
.mi-ic .caret { margin-left: 8px; }
.mi-xer { margin-left: -6px; margin-right: 8px; }
.news { width: 185px; height: 28px; line-height: 28px; background: linear-gradient(#fbfbfb, #f2f2f2); color: #006a6a; padding-left: 29px; border-radius: 3px 3px 0 0; margin-right: 8px; }
.phone { font-size: 12.600px; }
.mi-user .caret-u { margin-left: 9px; }
.bell { margin-left: -2px; }
.more-end { position: absolute; right: 3px; top: 5px; }

/* toolbar */
.toolbar { height: 30px; flex: none; display: flex; background: #f0f0f0; padding: 1px 0 2px 2px; gap: 3px; }
.seg { display: flex; align-items: center; background: linear-gradient(#fbfbfb, #ececec); border-radius: 3px; position: relative; }
.seg > .more { align-self: flex-start; margin-top: 5px; }
.seg-a { width: 149px; padding-left: 3px; }
.seg-b { width: 547px; padding-left: 2px; }
.seg-b .ti + .ti { margin-left: 6px; }
.seg-c { flex: 1; padding-left: 1px; }
.ti { display: flex; align-items: center; gap: 5px; white-space: nowrap; }
.sigma { width: 16px; text-align: center; font-size: 14px; font-family: "Liberation Sans", sans-serif; }
.combo2d { width: 62px; height: 23px; border: 1px solid #666; display: flex; align-items: center; gap: 4px; padding-left: 3px; color: #777; white-space: nowrap; flex: none; }
.swatch { width: 14px; height: 10px; background: #e4e4e4; border: 1px solid #ccc; }
.caret-r { margin-left: 2px; }

/* main */
.main { height: 624px; flex: none; display: flex; position: relative; background: #f0f0f0; }

/* nav */
.nav { width: 166px; flex: none; display: flex; flex-direction: column; padding-top: 1px; }
.nav-head { height: 15px; border: 1px solid #999; border-left-width: 0; display: flex; align-items: center; justify-content: space-between; padding-right: 4px; background: #f4f4f4; font-size: 12.500px; }
.nav-pin { display: flex; gap: 10px; padding-right: 2px; }
.pin { width: 10px; height: 10px; }
.nav-btn { height: 21px; margin-top: 1px; border: 1px solid #a8a8a8; background: #f0f0f0; text-align: center; line-height: 19px; flex: none; }
.nav-btn-1 { height: 22px; line-height: 20px; }
.nav-btn-b { margin-top: 2px; }
.nav-tools { height: 26px; margin-top: 2px; background: linear-gradient(#fff, #eee); display: flex; align-items: center; gap: 6px; padding-left: 6px; flex: none; }
.plusminus { width: 18px; height: 14px; }
.tree-box { height: 487px; flex: none; border: 1px solid #888; border-width: 1px 2px 2px; display: grid; grid-template-columns: 144px 1fr; grid-template-rows: 1fr 16px; background: #f0f0f0; margin-left: 2px; margin-right: 0; }
.tree-view { background: #fff; overflow: hidden; padding-top: 1px; white-space: nowrap; }
.l1 { height: 16px; display: flex; align-items: center; padding-left: 9px; }
.tw { width: 8px; height: 8px; }
.cn1 { width: 6px; height: 0; margin: 0 0 0 2px; border-top: 1px dotted #666; }
.l1 .ic { margin-left: 2px; margin-right: 4px; width: 16px; }
.kids { margin-left: 12px; padding-left: 19px; background: repeating-linear-gradient(#777 0 1px, transparent 1px 2px) 0 0 / 1px 100% no-repeat; }
.kids-in { border-left: 1px dotted #777; }
.l2 { height: 16px; display: flex; align-items: center; }
.cn2 { width: 10px; height: 0; border-top: 1px dotted #666; }
.l2 .ic { margin-right: 4px; }
.l2.sel { background: linear-gradient(#d6d6d6, #d6d6d6) 9px 0 / 69px 100% no-repeat; }
.vscroll { background: #f0f0f0; display: flex; flex-direction: column; align-items: center; padding-top: 5px; }
.sb-ar { width: 8px; height: 8px; }
.vthumb { width: 15px; height: 242px; background: #cdcdcd; margin-top: 61px; }
.sb-end { margin-top: auto; margin-bottom: 5px; }
.hscroll { grid-column: 1 / 3; display: flex; align-items: center; padding: 0 5px; background: #f0f0f0; justify-content: space-between; }
.hthumb { width: 104px; height: 15px; background: #cdcdcd; margin-right: 30px; margin-left: 3px; }

/* component panel */
.comp { width: 180px; margin-left: 6px; flex: none; display: flex; flex-direction: column; }
.comp-tools { height: 29px; display: flex; align-items: center; gap: 5px; padding-left: 4px; white-space: nowrap; overflow: hidden; flex: none; }
.comp-tools .ti { gap: 4px; }
.caret-n { width: 5px; }
.search { height: 29px; flex: none; padding: 4px 0 1px 1px; }
.search-in { display: block; width: 157px; height: 24px; border: 1px solid #888; background: #fff; color: #777; padding-left: 2px; line-height: 22px; overflow: hidden; }
.comp-tree { height: 564px; flex: none; background: #fff; border: 1px solid #888; border-width: 1px 0 1px 1px; padding-top: 2px; }
.root-row { height: 16px; display: flex; align-items: center; padding-left: 7px; }
.cn3 { width: 6px; height: 0; margin-left: 2px; border-top: 1px dotted #666; }
.root-row .ic { margin-left: 0; margin-right: 5px; }
.az-list { margin-left: 31px; border-left: 1px dotted #777; height: 280px; }
.az { height: 16px; display: flex; align-items: center; font: 12px/16px "Liberation Mono", monospace; letter-spacing: -1.200px; }
.gear { width: 12px; height: 12px; margin: 0 7px 0 2px; }
.az-hl { display: flex; align-items: center; background: #316fc8; width: 57px; height: 16px; margin-left: -2px; padding-left: 4px; }
.az-hl .gear { margin-left: 0; }

.center { flex: 1; background: #fff; }
.rstrip { width: 23px; flex: none; display: flex; flex-direction: column; background: #fff; }
.rstrip-top { height: 29px; background: #f0f0f0; flex: none; }
.rscroll { flex: none; height: 590px; margin-left: 1px; width: 17px; background: #f0f0f0; display: flex; flex-direction: column; align-items: center; padding-top: 12px; }
.rscroll .sb-end { margin-bottom: 1px; }
.rthumb { width: 15px; height: 365px; background: #cdcdcd; }

/* dialog */
.dialog { position: absolute; left: 353px; top: 0; width: 991px; height: 619px; background: #b9d1ea; border: 1px solid #1a2a38; border-width: 0 1px 1px 1px; display: flex; flex-direction: column; padding: 0 7px 5px 4px; }
.dlg-title { height: 30px; margin: 0 -7px 0 -4px; padding: 11px 0 0 6px; flex: none; background: linear-gradient(#98b1cf, #b9d1ea); }
.dlg-body { flex: 1; background: #f0f0f0; display: flex; flex-direction: column; min-height: 0; }
.tabs { height: 21px; display: flex; flex: none; padding-left: 4px; }
.tab { width: 46px; padding: 3px 0 0 5px; background: #eee; border: 1px solid #d4d4d4; border-bottom: 0; }
.tab-on { width: 52px; background: #fff; padding: 1px 0 0 6px; }
.tab-panel { flex: 1; margin: 0 1px 0 3px; border: 1px solid #d4d4d4; padding: 3px 2px 0 3px; display: flex; flex-direction: column; background: #f0f0f0; min-height: 0; }
.drow { height: 27px; flex: none; display: flex; align-items: center; background: linear-gradient(#f8f8f8, #eee); gap: 10px; white-space: nowrap; border-radius: 3px; }
.drow2 { gap: 0; height: 27px; }
.grip { width: 2px; height: 16px; margin-left: 2px; margin-right: -3px; background: repeating-linear-gradient(#aaa 0 2px, transparent 2px 4px); }
.drow2 .grip { margin-right: 6px; }
.dbtn-on { border: 1px solid #0078d7; background: #e5f1fb; padding: 3px 4px; margin-left: -5px; margin-right: -5px; }
.dbtn-a { margin-left: -4px; }
.dcombo { width: 135px; height: 25px; margin-left: 1px; background: #fff; border: 1px solid #0078d7; display: flex; align-items: center; justify-content: space-between; padding-left: 3px; font-size: 13px; font-family: "Liberation Sans", sans-serif; }
.dcombo-btn { width: 12px; height: 21px; margin-right: 1px; background: #dbe8f4; display: flex; align-items: center; justify-content: center; }
.canvas { width: 967px; height: 474px; margin-top: 2px; flex: none; border: 2px solid #f00; background: #000; position: relative; }
.draw { width: 963px; height: 470px; }
.grid-l path { fill: none; stroke: #555; stroke-dasharray: 7 3 2 3; }
.dim path { fill: none; stroke: #0f0; }
.outline { fill: none; stroke: #fff; stroke-width: 2; }
.leader { stroke: #fff; shape-rendering: auto; }
.rebar path { fill: none; stroke: #f00; }
.r3 { stroke-width: 3; }
.r4 { stroke-width: 4; }
.rebar-d path { fill: none; stroke: #f00; stroke-width: 2.500; }
.rebar-d .thick { stroke-width: 3.500; }
.d-y circle { fill: #555500; stroke: #f0e000; stroke-width: 1.400; }
.d-c circle { fill: #005566; stroke: #30d0e8; stroke-width: 1.400; }
.d-m circle { fill: #550055; stroke: #e020e0; stroke-width: 1.400; }
.lbl text { font: 14px "Liberation Sans", sans-serif; fill: #fff; letter-spacing: .3px; }
.lbl-cn { font: 13.500px "Noto Sans CJK SC", sans-serif; fill: #fff; letter-spacing: 1px; }
.lbl-g { font: 13.300px "Liberation Mono", monospace; fill: #0f0; }
.zero { font: 14px "Liberation Sans", sans-serif; fill: #333; }

/* floating panel */
.float { position: absolute; left: 8px; top: 52px; width: 200px; height: 56px; background: #f0f0f0; border: 1px solid #222; display: flex; flex-direction: column; }
.float-top { height: 7px; background: #fff; flex: none; }
.float-title { height: 21px; background: #a0a0a0; color: #eee; line-height: 18px; padding-left: 1px; flex: none; }
.float-row { flex: 1; display: flex; align-items: center; padding-left: 5px; background: linear-gradient(#fbfbfb, #eee); white-space: nowrap; }
.float-on { border: 1px solid #0078d7; background: #e5f1fb; padding: 2px 4px; margin: 0 5px; }
.float-car { margin-left: 8px; }
.float-combo { width: 58px; height: 23px; margin-left: 5px; border: 1px solid #777; display: flex; align-items: center; justify-content: flex-end; padding-right: 4px; }
.dstatus { height: 24px; flex: none; margin-top: 5px; display: flex; gap: 2px; margin-left: -3px; margin-right: -2px; }
.ds-a { width: 147px; border: 1px solid #ddd; padding-left: 7px; line-height: 22px; }
.ds-b { flex: 1; border: 1px solid #ddd; padding-left: 0; line-height: 22px; position: relative; }
.resize { position: absolute; right: 1px; bottom: 1px; width: 10px; height: 10px; background: radial-gradient(#aaa 1px, transparent 1.200px) 0 0 / 4px 4px; }

/* status bar */
.status { height: 21px; flex: none; display: flex; gap: 2px; padding: 1px 0 0; background: #f0f0f0; white-space: nowrap; }
.st { height: 20px; border: 1px solid #dcdcdc; border-bottom: 0; line-height: 19px; padding-left: 1px; background: linear-gradient(#f5f5f5, #f0f0f0); }
.st1 { width: 148px; } .st2 { width: 78px; } .st3 { width: 97px; } .st4 { width: 48px; padding-left: 3px; } .st5 { width: 914px; } .st6 { flex: 1; }

/* taskbar */
.taskbar { height: 40px; flex: none; background: #03090d; display: flex; color: #fff; }
.start { width: 48px; background: #000; display: flex; align-items: center; justify-content: center; }
.win-logo { width: 16px; height: 16px; }
.tsearch { width: 344px; background: #333; display: flex; align-items: center; padding-left: 9px; color: #8a8a8a; }
.cortana { width: 20px; height: 20px; border: 3px solid #ddd; border-radius: 50%; }
.ts-text { margin-left: 7px; font-size: 13px; }
.ts-mic { width: 12px; height: 16px; margin-left: auto; margin-right: 14px; }
.tapps { display: flex; }
.tapp { width: 50px; height: 40px; display: flex; align-items: center; justify-content: center; position: relative; }
.tapp:nth-child(1) { width: 48px; }
.tapp:nth-child(5) { margin-left: 3px; width: 50px; }
.tapp:nth-child(6) { width: 48px; }
.tapp:nth-child(7) { width: 48px; }
.tapp.under::after { content: ""; position: absolute; left: 4px; right: 6px; bottom: 0; height: 2px; background: #76b9ed; }
.tapp-act { background: #3a4246; }
.tapp-act::after { left: 0 !important; right: 0 !important; }
.tic { width: 20px; height: 20px; }
.tic-l { width: 24px; height: 24px; }
.tic-x { width: 24px; height: 24px; }
.tray { margin-left: auto; display: flex; align-items: center; padding-right: 26px; color: #ddd; }
.tlink { margin-right: 11px; }
.tr-ic { flex: none; }
.tr-up { width: 12px; height: 8px; margin-right: 11px; }
.tr-bat { width: 16px; height: 10px; margin-right: 9px; }
.tr-wifi { width: 16px; height: 16px; margin-right: 6px; }
.tr-vol { width: 16px; height: 16px; margin-right: 10px; }
.tr-kb { width: 22px; height: 16px; margin-right: 10px; }
.tzh { margin-right: 14px; font-size: 13px; }
.tr-s { width: 16px; height: 18px; }
.clock { display: flex; flex-direction: column; align-items: center; width: 60px; margin-left: 16px; line-height: 19px; margin-right: 19px; color: #eee; }
.tr-note { width: 16px; height: 16px; }
```
